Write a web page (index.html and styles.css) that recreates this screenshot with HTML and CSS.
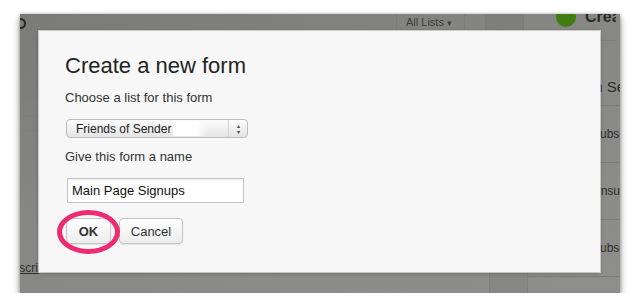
FILE: index.html
```html
<!DOCTYPE html>
<html lang="en">
<head>
    <meta charset="UTF-8">
    <title>Create a new form</title>
    <link rel="stylesheet" href="styles.css">
</head>
<body>

<div class="screen">
    <div class="topbar">
        <div class="logo-bit"></div>
        <div class="tb-spacer"></div>
        <div class="tb-cell filter">All Lists <span class="caret">&#9662;</span></div>
        <div class="tb-cell narrow"></div>
        <div class="tb-cell dark"></div>
        <div class="tb-create">
            <span class="plus-dot"></span>
            <span class="create-text">Create Form</span>
        </div>
    </div>

    <div class="backdrop">
        <div class="side-left">
            <div class="lrow first"></div>
            <div class="lrow"></div>
            <div class="lrow tall"></div>
            <div class="lrow"></div>
            <div class="lfill"></div>
            <div class="lfoot"><a href="#">Subscribers</a></div>
        </div>
        <div class="main-area"></div>
        <div class="dark-col"></div>
        <div class="side-right">
            <div class="rhead">Design Settings</div>
            <div class="rrow">Subscribed</div>
            <div class="rrow">Unsubscribed</div>
            <div class="rrow">Subscribed</div>
        </div>
    </div>

    <div class="dialog">
        <h2 class="title">Create a new form</h2>
        <div class="label">Choose a list for this form</div>
        <div class="fake-select">
            <span class="sel-text">Friends of Sender</span>
            <span class="sel-glare"></span>
            <span class="sel-arrows">&#9652;<br>&#9662;</span>
        </div>
        <div class="label">Give this form a name</div>
        <input class="name-input" type="text" value="Main Page Signups">
        <div class="buttons">
            <button class="btn ok">OK</button>
            <button class="btn">Cancel</button>
        </div>
        <div class="ring"></div>
    </div>
</div>

</body>
</html>
```

FILE: styles.css
```css
body {
    margin: 0;
    background: #fff;
    font-family: 'Liberation Sans', Arial, sans-serif;
}

/* Screenshot frame with the dimmed page behind the modal */
.screen {
    position: relative;
    width: 600px;
    height: 279px;
    margin: 14px 0 0 20px;
    overflow: hidden;
    background: linear-gradient(160deg, #7a7b79 0%, #878886 45%, #8e8e8c 100%);
    box-shadow: 0 4px 7px rgba(0, 0, 0, 0.45), 0 0 3px rgba(0, 0, 0, 0.25);
    color: #2d2d2c;
}
.topbar {
    height: 26px;
    display: flex;
}
.topbar > * {
    flex-shrink: 0;
}
.logo-bit {
    width: 7px;
    height: 7px;
    margin: 4px 0 0 -5px;
    border: 2px solid #262626;
    border-radius: 50%;
}
.tb-spacer {
    width: 370px;
}
.tb-cell {
    border-left: 1px solid #7b7b79;
    box-sizing: border-box;
}
.tb-cell.filter {
    width: 68px;
    padding: 2px 0 0 9px;
    font-size: 11px;
    color: #3c3c3b;
}
.caret {
    font-size: 9px;
}
.tb-cell.narrow {
    width: 21px;
}
.tb-cell.dark {
    width: 39px;
    background: rgba(0, 0, 0, 0.04);
    border-right: 1px solid #7b7b79;
}
.tb-create {
    width: 92px;
    display: flex;
    align-items: center;
    padding-left: 32px;
    box-sizing: border-box;
    margin-top: -21px;
    height: 48px;
    border-bottom: 1px solid #7c7c7a;
    overflow: hidden;
}
.plus-dot {
    width: 20px;
    height: 20px;
    border-radius: 50%;
    background: #3f7d12;
    flex-shrink: 0;
}
.create-text {
    margin-left: 9px;
    font-size: 16px;
    font-weight: bold;
    white-space: nowrap;
    color: #2a2a2a;
}

.backdrop {
    height: 253px;
    display: flex;
}
.backdrop > * {
    flex-shrink: 0;
    min-width: 0;
    overflow: hidden;
}
.side-left {
    width: 19px;
    display: flex;
    flex-direction: column;
}
.lrow {
    height: 13px;
    border-bottom: 1px solid #7d7e7c;
}
.lrow.first {
    height: 42px;
}
.lrow.tall {
    height: 19px;
}
.lfill {
    flex: 1;
}
.lfoot {
    height: 32px;
    white-space: nowrap;
    font-size: 12px;
}
.lfoot a {
    display: inline-block;
    margin-left: -22px;
    color: #2f2f2e;
}
.main-area {
    width: 450px;
}
.dark-col {
    width: 39px;
    box-sizing: border-box;
    border-left: 1px solid #7f7f7d;
    border-right: 1px solid #7f7f7d;
    background: rgba(0, 0, 0, 0.04);
}
.side-right {
    width: 92px;
    display: flex;
    flex-direction: column;
    white-space: nowrap;
}
.rhead {
    height: 66px;
    box-sizing: border-box;
    padding: 38px 0 0 28px;
    font-size: 15px;
    border-bottom: 1px solid #7c7c7a;
}
.rrow {
    height: 57px;
    box-sizing: border-box;
    display: flex;
    align-items: center;
    padding-left: 64px;
    font-size: 12px;
    border-bottom: 1px solid #7c7c7a;
}

/* Modal */
.dialog {
    position: absolute;
    left: 19px;
    top: 17px;
    width: 561px;
    height: 241px;
    box-sizing: border-box;
    padding: 22px 26px;
    background: #f7f7f7;
    box-shadow: 0 0 0 1px rgba(255, 255, 255, 0.6), 0 1px 4px rgba(0, 0, 0, 0.3);
    color: #333;
}
.title {
    margin: 0;
    font-size: 22px;
    line-height: 26px;
    font-weight: normal;
    color: #232323;
}
.label {
    margin-top: 11px;
    font-size: 13px;
    line-height: 16px;
    color: #333;
}
.fake-select {
    position: relative;
    width: 182px;
    height: 19px;
    margin: 13px 0 0 1px;
    box-sizing: border-box;
    display: flex;
    align-items: center;
    padding-left: 9px;
    border: 1px solid #bdbdbd;
    border-radius: 4px;
    background: linear-gradient(#fcfcfc, #e4e4e4);
    font-size: 12px;
    color: #222;
}
.sel-glare {
    width: 34px;
    height: 15px;
    margin-left: 2px;
    background: linear-gradient(90deg, #fff 70%, rgba(255, 255, 255, 0));
}
.sel-arrows {
    margin-left: auto;
    width: 19px;
    height: 17px;
    box-sizing: border-box;
    border-left: 1px solid #d2d2d2;
    font-size: 6px;
    line-height: 6px;
    text-align: center;
    padding-top: 3px;
    color: #444;
}
.name-input {
    display: block;
    width: 177px;
    height: 25px;
    margin: 13px 0 0 2px;
    box-sizing: border-box;
    padding: 0 0 0 4px;
    border: 1px solid #c5c5c5;
    background: #fff;
    box-shadow: inset 0 1px 2px rgba(0, 0, 0, 0.08);
    font-family: 'Liberation Sans', Arial, sans-serif;
    font-size: 13px;
    color: #111;
}
.buttons {
    display: flex;
    gap: 8px;
    margin: 15px 0 0 1px;
}
.btn {
    height: 26px;
    width: 64px;
    border: 1px solid #c4c4c4;
    border-radius: 4px;
    background: linear-gradient(#ffffff, #ececec);
    box-shadow: 0 1px 1px rgba(0, 0, 0, 0.08);
    font-family: 'Liberation Sans', Arial, sans-serif;
    font-size: 13px;
    color: #333;
    padding: 0;
}
.btn.ok {
    width: 45px;
    font-weight: bold;
}
.ring {
    position: absolute;
    left: 18px;
    top: 179px;
    width: 63px;
    height: 44px;
    box-sizing: border-box;
    border: 5px solid #ee2b71;
    border-radius: 50%;
}
```
